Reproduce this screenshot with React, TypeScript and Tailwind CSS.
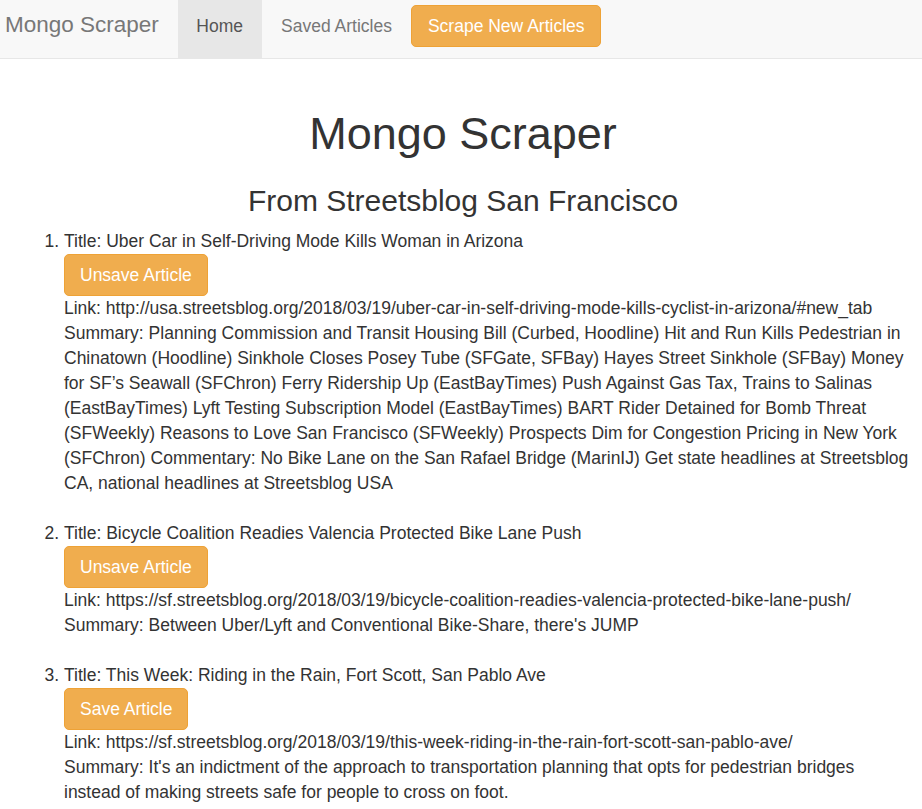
import React from "react";

type Article = {
  title: string;
  link: string;
  summary: string;
  saved: boolean;
};

const articles: Article[] = [
  {
    title: "Uber Car in Self-Driving Mode Kills Woman in Arizona",
    link: "http://usa.streetsblog.org/2018/03/19/uber-car-in-self-driving-mode-kills-cyclist-in-arizona/#new_tab",
    summary:
      "Planning Commission and Transit Housing Bill (Curbed, Hoodline) Hit and Run Kills Pedestrian in Chinatown (Hoodline) Sinkhole Closes Posey Tube (SFGate, SFBay) Hayes Street Sinkhole (SFBay) Money for SF\u2019s Seawall (SFChron) Ferry Ridership Up (EastBayTimes) Push Against Gas Tax, Trains to Salinas (EastBayTimes) Lyft Testing Subscription Model (EastBayTimes) BART Rider Detained for Bomb Threat (SFWeekly) Reasons to Love San Francisco (SFWeekly) Prospects Dim for Congestion Pricing in New York (SFChron) Commentary: No Bike Lane on the San Rafael Bridge (MarinIJ) Get state headlines at Streetsblog CA, national headlines at Streetsblog USA",
    saved: true,
  },
  {
    title: "Bicycle Coalition Readies Valencia Protected Bike Lane Push",
    link: "https://sf.streetsblog.org/2018/03/19/bicycle-coalition-readies-valencia-protected-bike-lane-push/",
    summary: "Between Uber/Lyft and Conventional Bike-Share, there's JUMP",
    saved: true,
  },
  {
    title: "This Week: Riding in the Rain, Fort Scott, San Pablo Ave",
    link: "https://sf.streetsblog.org/2018/03/19/this-week-riding-in-the-rain-fort-scott-san-pablo-ave/",
    summary:
      "It's an indictment of the approach to transportation planning that opts for pedestrian bridges instead of making streets safe for people to cross on foot.",
    saved: false,
  },
];

function WarningButton({ children }: { children: React.ReactNode }) {
  return (
    <button className="rounded-[5px] border border-[#eea236] bg-[#f0ad4e] px-[15px] py-[7.5px] text-[17.5px] leading-[25px] text-white">
      {children}
    </button>
  );
}

function Navbar() {
  return (
    <nav className="flex h-[59px] items-start border-b border-[#e7e7e7] bg-[#f8f8f8]">
      <a className="ml-[5px] mt-[11.5px] text-[22.5px] leading-[25px] text-[#777]">Mongo Scraper</a>
      <ul className="ml-[19px] flex h-[58px] items-start">
        <li className="h-full bg-[#e7e7e7] px-[18.5px] pt-[14px] text-[17.5px] leading-[25px] text-[#555]">Home</li>
        <li className="h-full px-[19.5px] pt-[14px] text-[17.5px] leading-[25px] text-[#777]">Saved Articles</li>
        <li className="pt-[5px]">
          <button className="rounded-[5px] border border-[#eea236] bg-[#f0ad4e] px-[15.5px] py-[7.5px] text-[17.5px] leading-[25px] text-white">
            Scrape New Articles
          </button>
        </li>
      </ul>
    </nav>
  );
}

export default function App() {
  return (
    <div
      className="min-h-screen bg-white text-[17.5px] leading-[25px] text-[#333]"
      style={{ fontFamily: '"Liberation Sans", Arial, sans-serif' }}
    >
      <Navbar />
      <main className="pl-[14px] pr-[10px] pt-[50px]">
        <h1 className="text-center text-[45px] font-normal leading-[49.5px]">Mongo Scraper</h1>
        <h2 className="mt-[25px] mb-[12.5px] text-center text-[30px] font-normal leading-[33px]">
          From Streetsblog San Francisco
        </h2>
        <ol className="list-decimal pl-[50px]">
          {articles.map((a) => (
            <li key={a.link} className="mb-[25px]">
              <div>Title: {a.title}</div>
              <WarningButton>{a.saved ? "Unsave Article" : "Save Article"}</WarningButton>
              <div>Link: {a.link}</div>
              <div>Summary: {a.summary}</div>
            </li>
          ))}
        </ol>
      </main>
    </div>
  );
}
